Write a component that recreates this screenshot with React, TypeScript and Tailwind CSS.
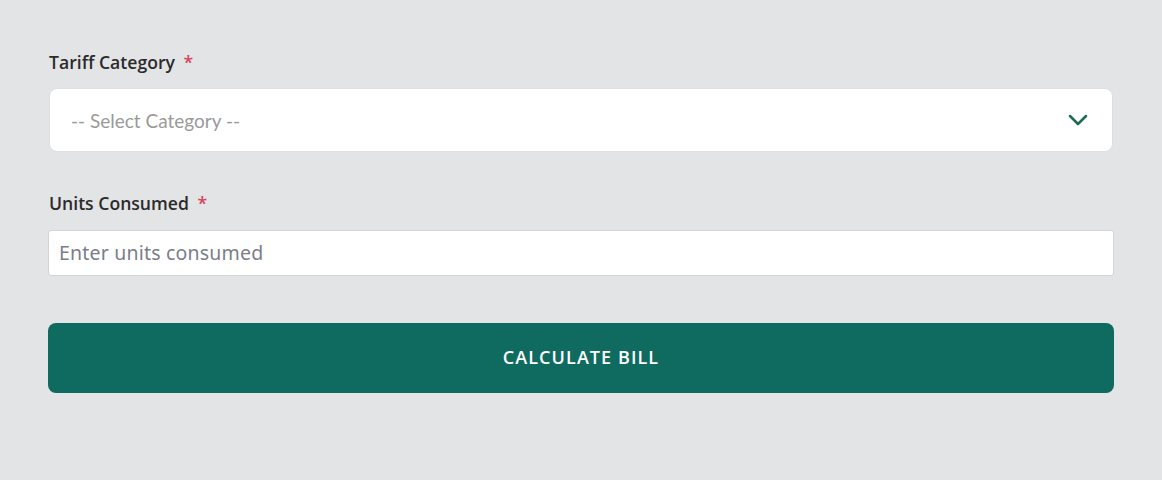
import { ChevronDown } from 'lucide-react'

export default function App() {
  return (
    <div className="w-full min-h-screen bg-[#e3e4e6] px-12 pt-[49px] font-['Open_Sans',sans-serif]">
      <div className="flex flex-col">
        <label className="text-[17.6px] font-semibold text-[#2b2b2b] ml-px">
          Tariff Category <span className="text-[#d9435a] ml-1">*</span>
        </label>
        <div className="mt-[13px] mx-px h-[64px] flex items-center justify-between bg-white rounded-lg border border-[#dedfe1] pl-[21px] pr-[18px]">
          <span className="text-[19px] text-[#9a9a9a] font-['Lato',sans-serif] pt-px">-- Select Category --</span>
          <ChevronDown className="w-8 h-8 text-[#1d6b55]" strokeWidth={1.9} />
        </div>
      </div>

      <div className="flex flex-col mt-[38px]">
        <label className="text-[17.6px] font-semibold text-[#2b2b2b] ml-px">
          Units Consumed <span className="text-[#d9435a] ml-1">*</span>
        </label>
        <input
          type="text"
          placeholder="Enter units consumed"
          className="mt-[13px] h-[46px] bg-white border border-[#d3d4d6] rounded-[3px] px-[10px] text-[19.5px] tracking-[0.01em] font-['Noto_Sans',sans-serif] placeholder:text-[#7a7e89] outline-none"
        />
      </div>

      <button
        type="button"
        className="mt-[47px] w-full h-[70px] bg-[#0f6b5f] text-white rounded-lg text-[18px] font-semibold tracking-[0.06em]"
      >
        CALCULATE BILL
      </button>
    </div>
  )
}
